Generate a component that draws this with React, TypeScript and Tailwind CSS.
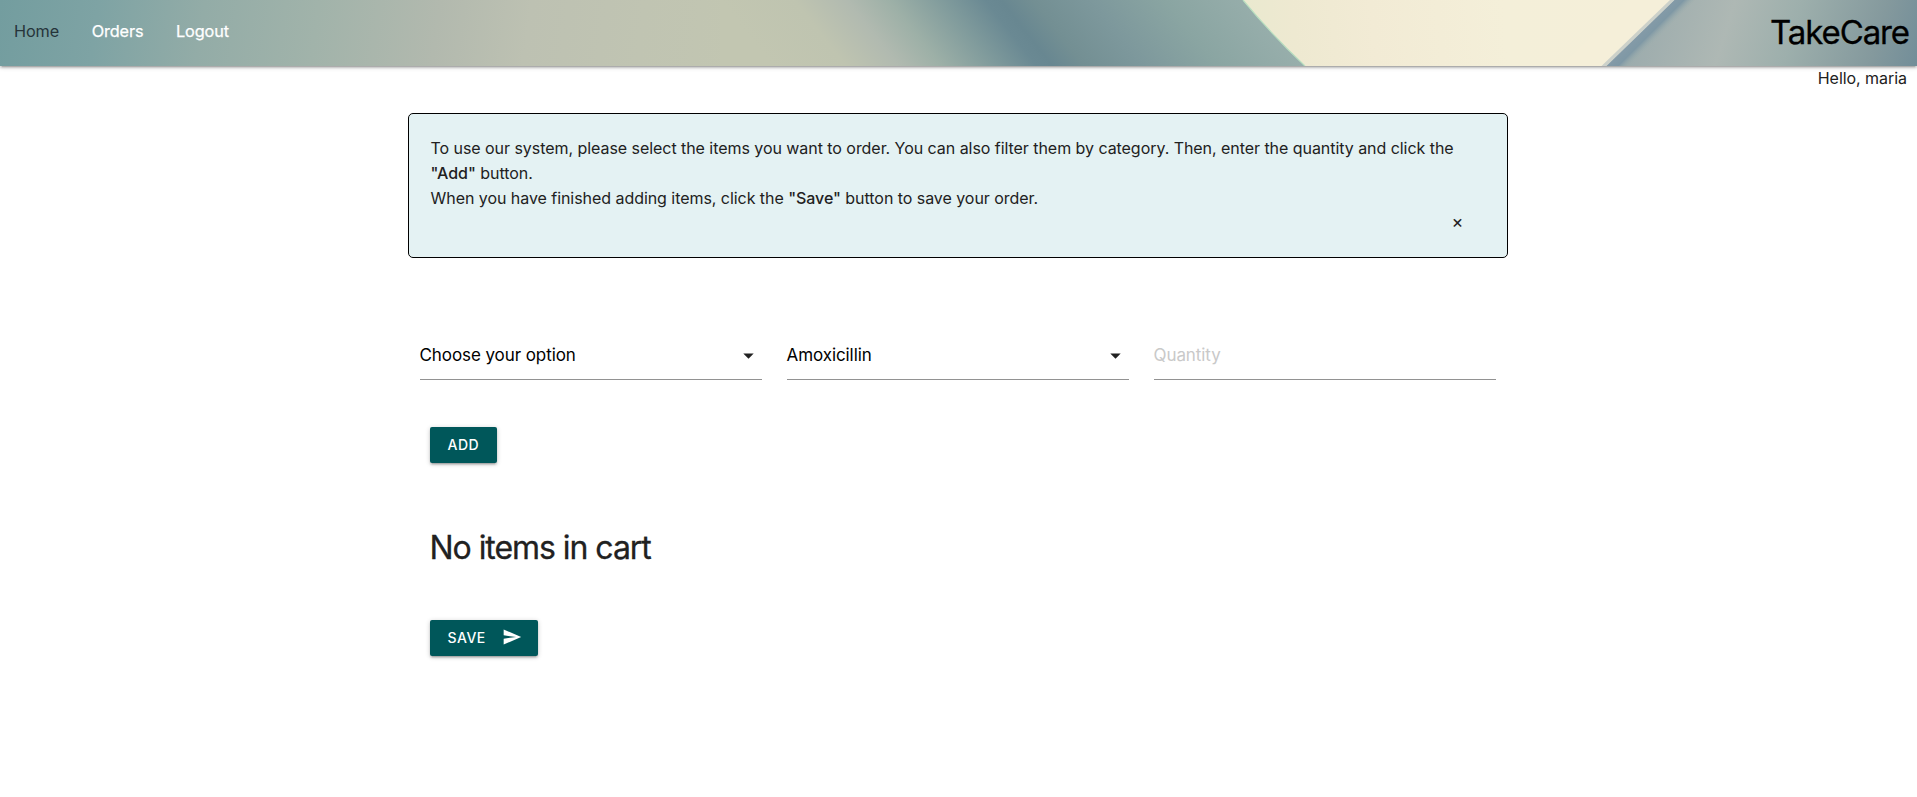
import type { ReactNode } from "react";

function BannerArt() {
  return (
    <svg className="absolute inset-0 h-full w-full" viewBox="0 0 1917 66" preserveAspectRatio="none" aria-hidden="true">
      <defs>
        <linearGradient id="sky" gradientUnits="userSpaceOnUse" x1="0" y1="0" x2="760" y2="0" gradientTransform="skewX(-8)">
          <stop offset="0" stopColor="#739d9f" />
          <stop offset="0.13" stopColor="#7ea3a4" />
          <stop offset="0.27" stopColor="#93aca7" />
          <stop offset="0.42" stopColor="#a1b3aa" />
          <stop offset="0.58" stopColor="#b2b9ae" />
          <stop offset="0.7" stopColor="#bdc1b2" />
          <stop offset="0.85" stopColor="#c0c4b2" />
          <stop offset="1" stopColor="#c2c6b1" />
        </linearGradient>
        <linearGradient id="dusk" gradientUnits="userSpaceOnUse" x1="720" y1="0" x2="1250" y2="0" gradientTransform="skewX(38)">
          <stop offset="0" stopColor="#c2c6b1" />
          <stop offset="0.14" stopColor="#bfc4b0" />
          <stop offset="0.24" stopColor="#b1bab0" />
          <stop offset="0.32" stopColor="#9db0a7" />
          <stop offset="0.42" stopColor="#809b9c" />
          <stop offset="0.5" stopColor="#6a8993" />
          <stop offset="0.53" stopColor="#688791" />
          <stop offset="0.59" stopColor="#738f93" />
          <stop offset="0.7" stopColor="#7d989c" />
          <stop offset="0.84" stopColor="#8aa5a2" />
          <stop offset="1" stopColor="#97aeab" />
        </linearGradient>
        <linearGradient id="cream" gradientUnits="userSpaceOnUse" x1="1243" y1="50" x2="1680" y2="10">
          <stop offset="0" stopColor="#e9e9cf" />
          <stop offset="0.12" stopColor="#eee9d1" />
          <stop offset="0.3" stopColor="#f2ebd5" />
          <stop offset="0.6" stopColor="#f4efd9" />
          <stop offset="1" stopColor="#f5efd9" />
        </linearGradient>
        <linearGradient id="edge" gradientUnits="userSpaceOnUse" x1="1639" y1="33" x2="1920" y2="120">
          <stop offset="0" stopColor="#9dacad" />
          <stop offset="0.28" stopColor="#aeb8b4" />
          <stop offset="0.5" stopColor="#9dafac" />
          <stop offset="0.78" stopColor="#84999d" />
          <stop offset="1" stopColor="#6b8997" />
        </linearGradient>
        <linearGradient id="ridge" gradientUnits="userSpaceOnUse" x1="1639" y1="33" x2="1651" y2="45">
          <stop offset="0" stopColor="#859ba8" />
          <stop offset="0.5" stopColor="#7f98a5" />
          <stop offset="1" stopColor="#9baead" stopOpacity="0" />
        </linearGradient>
      </defs>
      <rect width="740" height="66" fill="url(#sky)" />
      <rect x="720" width="600" height="66" fill="url(#dusk)" />
      <path d="M1243 0 Q1272 35 1305 66 H1640 V0 Z" fill="url(#cream)" />
      <path d="M1243 0 Q1272 35 1305 66" fill="none" stroke="#b9dfc0" strokeWidth="1.2" />
      <path d="M1674 0 H1917 V66 H1606 Z" fill="url(#edge)" />
      <path d="M1630 0 H1671 L1602 66 H1560 Z" fill="#f5efd9" />
      <path d="M1674 0 H1698 L1630 66 H1606 Z" fill="url(#ridge)" />
      <path d="M1670 0 H1674.500 L1606.500 66 H1601.500 Z" fill="#ccd1ca" />
    </svg>
  );
}

function Field({ text, placeholder, select }: { text: string; placeholder?: boolean; select?: boolean }) {
  return (
    <div className="flex h-[48px] flex-1 items-center justify-between border-b border-[#929292] pb-px">
      <span className={placeholder ? "text-[17px] tracking-[-0.08px] text-[#c9c9c9]" : "text-[17px] tracking-[-0.08px] text-black"}>
        {text}
      </span>
      {select && (
        <svg className="mr-[1px] size-[25px]" viewBox="0 0 24 24" fill="#212121">
          <path d="M7 10l5 5 5-5z" />
        </svg>
      )}
    </div>
  );
}

function Button({ children }: { children: ReactNode }) {
  return (
    <button className="flex h-9 items-center rounded-[2px] bg-[#00575a] pr-[17.5px] pb-[2px] pl-[18px] text-[14px] font-medium tracking-[0.5px] text-white shadow-[0_2px_2px_0_rgba(0,0,0,0.14),0_3px_1px_-2px_rgba(0,0,0,0.12),0_1px_5px_0_rgba(0,0,0,0.2)]">
      {children}
    </button>
  );
}

export default function App() {
  return (
    <div className="min-h-screen bg-white font-['Inter',sans-serif] text-[16px] leading-[25px] text-[#212121]">
      <nav className="relative h-[66px] shadow-[0_2px_2px_0_rgba(0,0,0,0.14),0_3px_1px_-2px_rgba(0,0,0,0.12),0_1px_5px_0_rgba(0,0,0,0.2)]">
        <BannerArt />
        <div className="relative flex h-full items-center justify-between pr-[8px] pb-[2px] pl-[14px]">
          <ul className="flex gap-[32.5px] pb-[2px] text-[16.25px] tracking-[-0.1px] text-white">
            <li className="text-[#26343a]">Home</li>
            <li className="[-webkit-text-stroke:0.25px_white]">Orders</li>
            <li className="[-webkit-text-stroke:0.25px_white]">Logout</li>
          </ul>
          <span className="text-[33px] tracking-[-1.1px] text-black [-webkit-text-stroke:0.3px_black]">TakeCare</span>
        </div>
      </nav>
      <p className="pr-[10px] text-right tracking-[-0.05px]">Hello, maria</p>

      <main className="mx-auto w-[1100px]">
        <div className="-ml-px mr-px">
          <section className="mt-[22px] h-[145px] rounded-[5px] border border-black bg-[#e4f2f3] px-[22px] pt-[22px]">
            <p className="tracking-[-0.05px]">
              To use our system, please select the items you want to order. You can also filter them by category. Then, enter the quantity and click the{" "}
              <span className="font-medium">"Add"</span> button.
              <br />
              When you have finished adding items, click the <span className="font-medium">"Save"</span> button to save your order.
            </p>
            <div className="flex justify-end pr-[21px]">
              <button aria-label="Close" className="-mt-[2px] text-[18px]">×</button>
            </div>
          </section>

          <div className="mt-[74px] flex gap-[25px] px-[12px]">
            <Field text="Choose your option" select />
            <Field text="Amoxicillin" select />
            <Field text="Quantity" placeholder />
          </div>

          <div className="mt-[47px] flex pl-[22px]">
            <Button>ADD</Button>
          </div>
          <h4 className="mt-[67px] pl-[22px] text-[32px] leading-[36px] tracking-[-1.05px] [-webkit-text-stroke:0.3px_#212121]">
            No items in cart
          </h4>
          <div className="mt-[54px] flex pl-[22px]">
            <Button>
              SAVE
              <svg className="mr-[-1px] ml-[16px] size-5" viewBox="0 0 24 24" fill="currentColor">
                <path d="M2.010 21L23 12 2.010 3 2 10l15 2-15 2z" />
              </svg>
            </Button>
          </div>
        </div>
      </main>
    </div>
  );
}
